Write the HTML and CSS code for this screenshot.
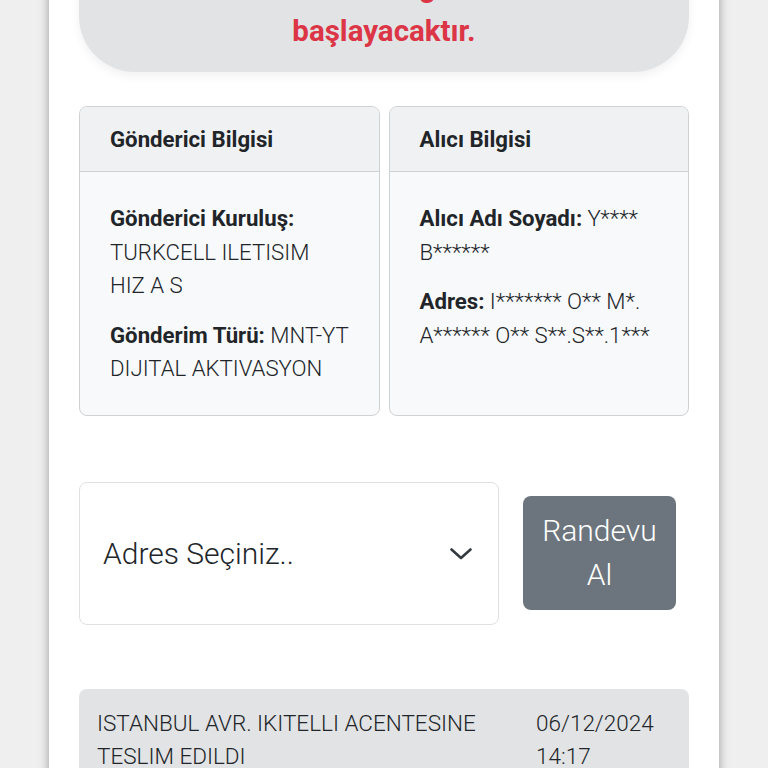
FILE: index.html
```html
<!DOCTYPE html>
<html lang="tr">
<head>
    <meta charset="UTF-8">
    <meta name="viewport" content="width=device-width, initial-scale=1.0">
    <title>Gönderi Takip</title>
    <link rel="stylesheet" href="styles.css">
</head>
<body>

    <div class="page">
        <div class="notice">
            Teslimat ertesi gün tekrar<br>
            başlayacaktır.
        </div>

        <div class="info-row">
            <div class="card">
                <div class="card-header">Gönderici Bilgisi</div>
                <div class="card-body">
                    <p><b>Gönderici Kuruluş:</b> TURKCELL ILETISIM HIZ A S</p>
                    <p><b>Gönderim Türü:</b> MNT-YT DIJITAL AKTIVASYON</p>
                </div>
            </div>
            <div class="card">
                <div class="card-header">Alıcı Bilgisi</div>
                <div class="card-body">
                    <p><b>Alıcı Adı Soyadı:</b> Y**** B******</p>
                    <p><b>Adres:</b> I******* O** M*. A****** O** S**.S**.1***</p>
                </div>
            </div>
        </div>

        <div class="appointment">
            <div class="address-select">
                <span>Adres Seçiniz..</span>
                <svg class="chevron" width="22" height="12" viewBox="0 0 22 12">
                    <polyline points="1.5,1.5 11,10 20.5,1.5" fill="none" stroke="#343a40" stroke-width="2.6" stroke-linecap="round" stroke-linejoin="round"/>
                </svg>
            </div>
            <button class="btn-appointment">Randevu<br>Al</button>
        </div>

        <div class="movement">
            <div class="movement-text">ISTANBUL AVR. IKITELLI ACENTESINE TESLIM EDILDI</div>
            <div class="movement-date">06/12/2024<br>14:17</div>
        </div>
    </div>

</body>
</html>
```

FILE: styles.css
```css
body {
    font-family: 'Roboto', sans-serif;
    background: #efefef;
    color: #212529;
    margin: 0;
    padding: 0;
    overflow: hidden;
}

.page {
    width: 610px;
    margin: 0 auto;
    padding: 0 30px 40px;
    background: #fff;
    box-shadow: 0 0 10px rgba(0, 0, 0, 0.35);
    min-height: 800px;
}

.notice {
    margin-top: -35px;
    padding: 0 20px 19px;
    background: #e2e3e5;
    border-radius: 0 0 56px 56px;
    box-shadow: 0 4px 10px rgba(0, 0, 0, 0.06);
    color: #dc3545;
    font-size: 29.5px;
    font-weight: 700;
    line-height: 44px;
    text-align: center;
}

.info-row {
    display: grid;
    grid-template-columns: 1fr 1fr;
    gap: 9px;
    margin-top: 34px;
}

.card {
    border: 1px solid #d0d1d3;
    border-radius: 8px;
    background: #f8f9fa;
    overflow: hidden;
}

.card-header {
    padding: 20px 30px;
    background: #f0f1f3;
    border-bottom: 1px solid #cfd0d2;
    font-size: 22.2px;
    font-weight: 700;
    line-height: 24px;
}

.card-body {
    padding: 30px 30px 29px;
}

.card-body p {
    margin: 0 0 16px;
    font-size: 22.2px;
    font-weight: 300;
    line-height: 33.5px;
}

.card-body p:last-child {
    margin-bottom: 0;
}

.card-body b {
    font-weight: 700;
}

.appointment {
    display: flex;
    align-items: center;
    gap: 24px;
    margin-top: 66px;
}

.address-select {
    width: 420px;
    height: 143px;
    box-sizing: border-box;
    padding: 0 26px 0 23px;
    border: 1px solid #dee0e2;
    border-radius: 8px;
    display: flex;
    align-items: center;
    justify-content: space-between;
    font-size: 30px;
    font-weight: 300;
    color: #212529;
}

.chevron {
    display: block;
    margin-top: 2px;
}

.btn-appointment {
    width: 153px;
    padding: 13px 0;
    background-color: #6c757d;
    color: #fff;
    border: none;
    border-radius: 8px;
    font-family: 'Roboto', sans-serif;
    font-size: 30px;
    font-weight: 300;
    line-height: 44px;
    cursor: pointer;
}

.movement {
    display: flex;
    justify-content: space-between;
    margin-top: 64px;
    padding: 18px 36px 18px 18px;
    background: #e2e3e5;
    border-radius: 8px;
    font-size: 22.5px;
    font-weight: 300;
    line-height: 33px;
}

.movement-text {
    width: 410px;
}

.movement-date {
    width: 117px;
}
```
